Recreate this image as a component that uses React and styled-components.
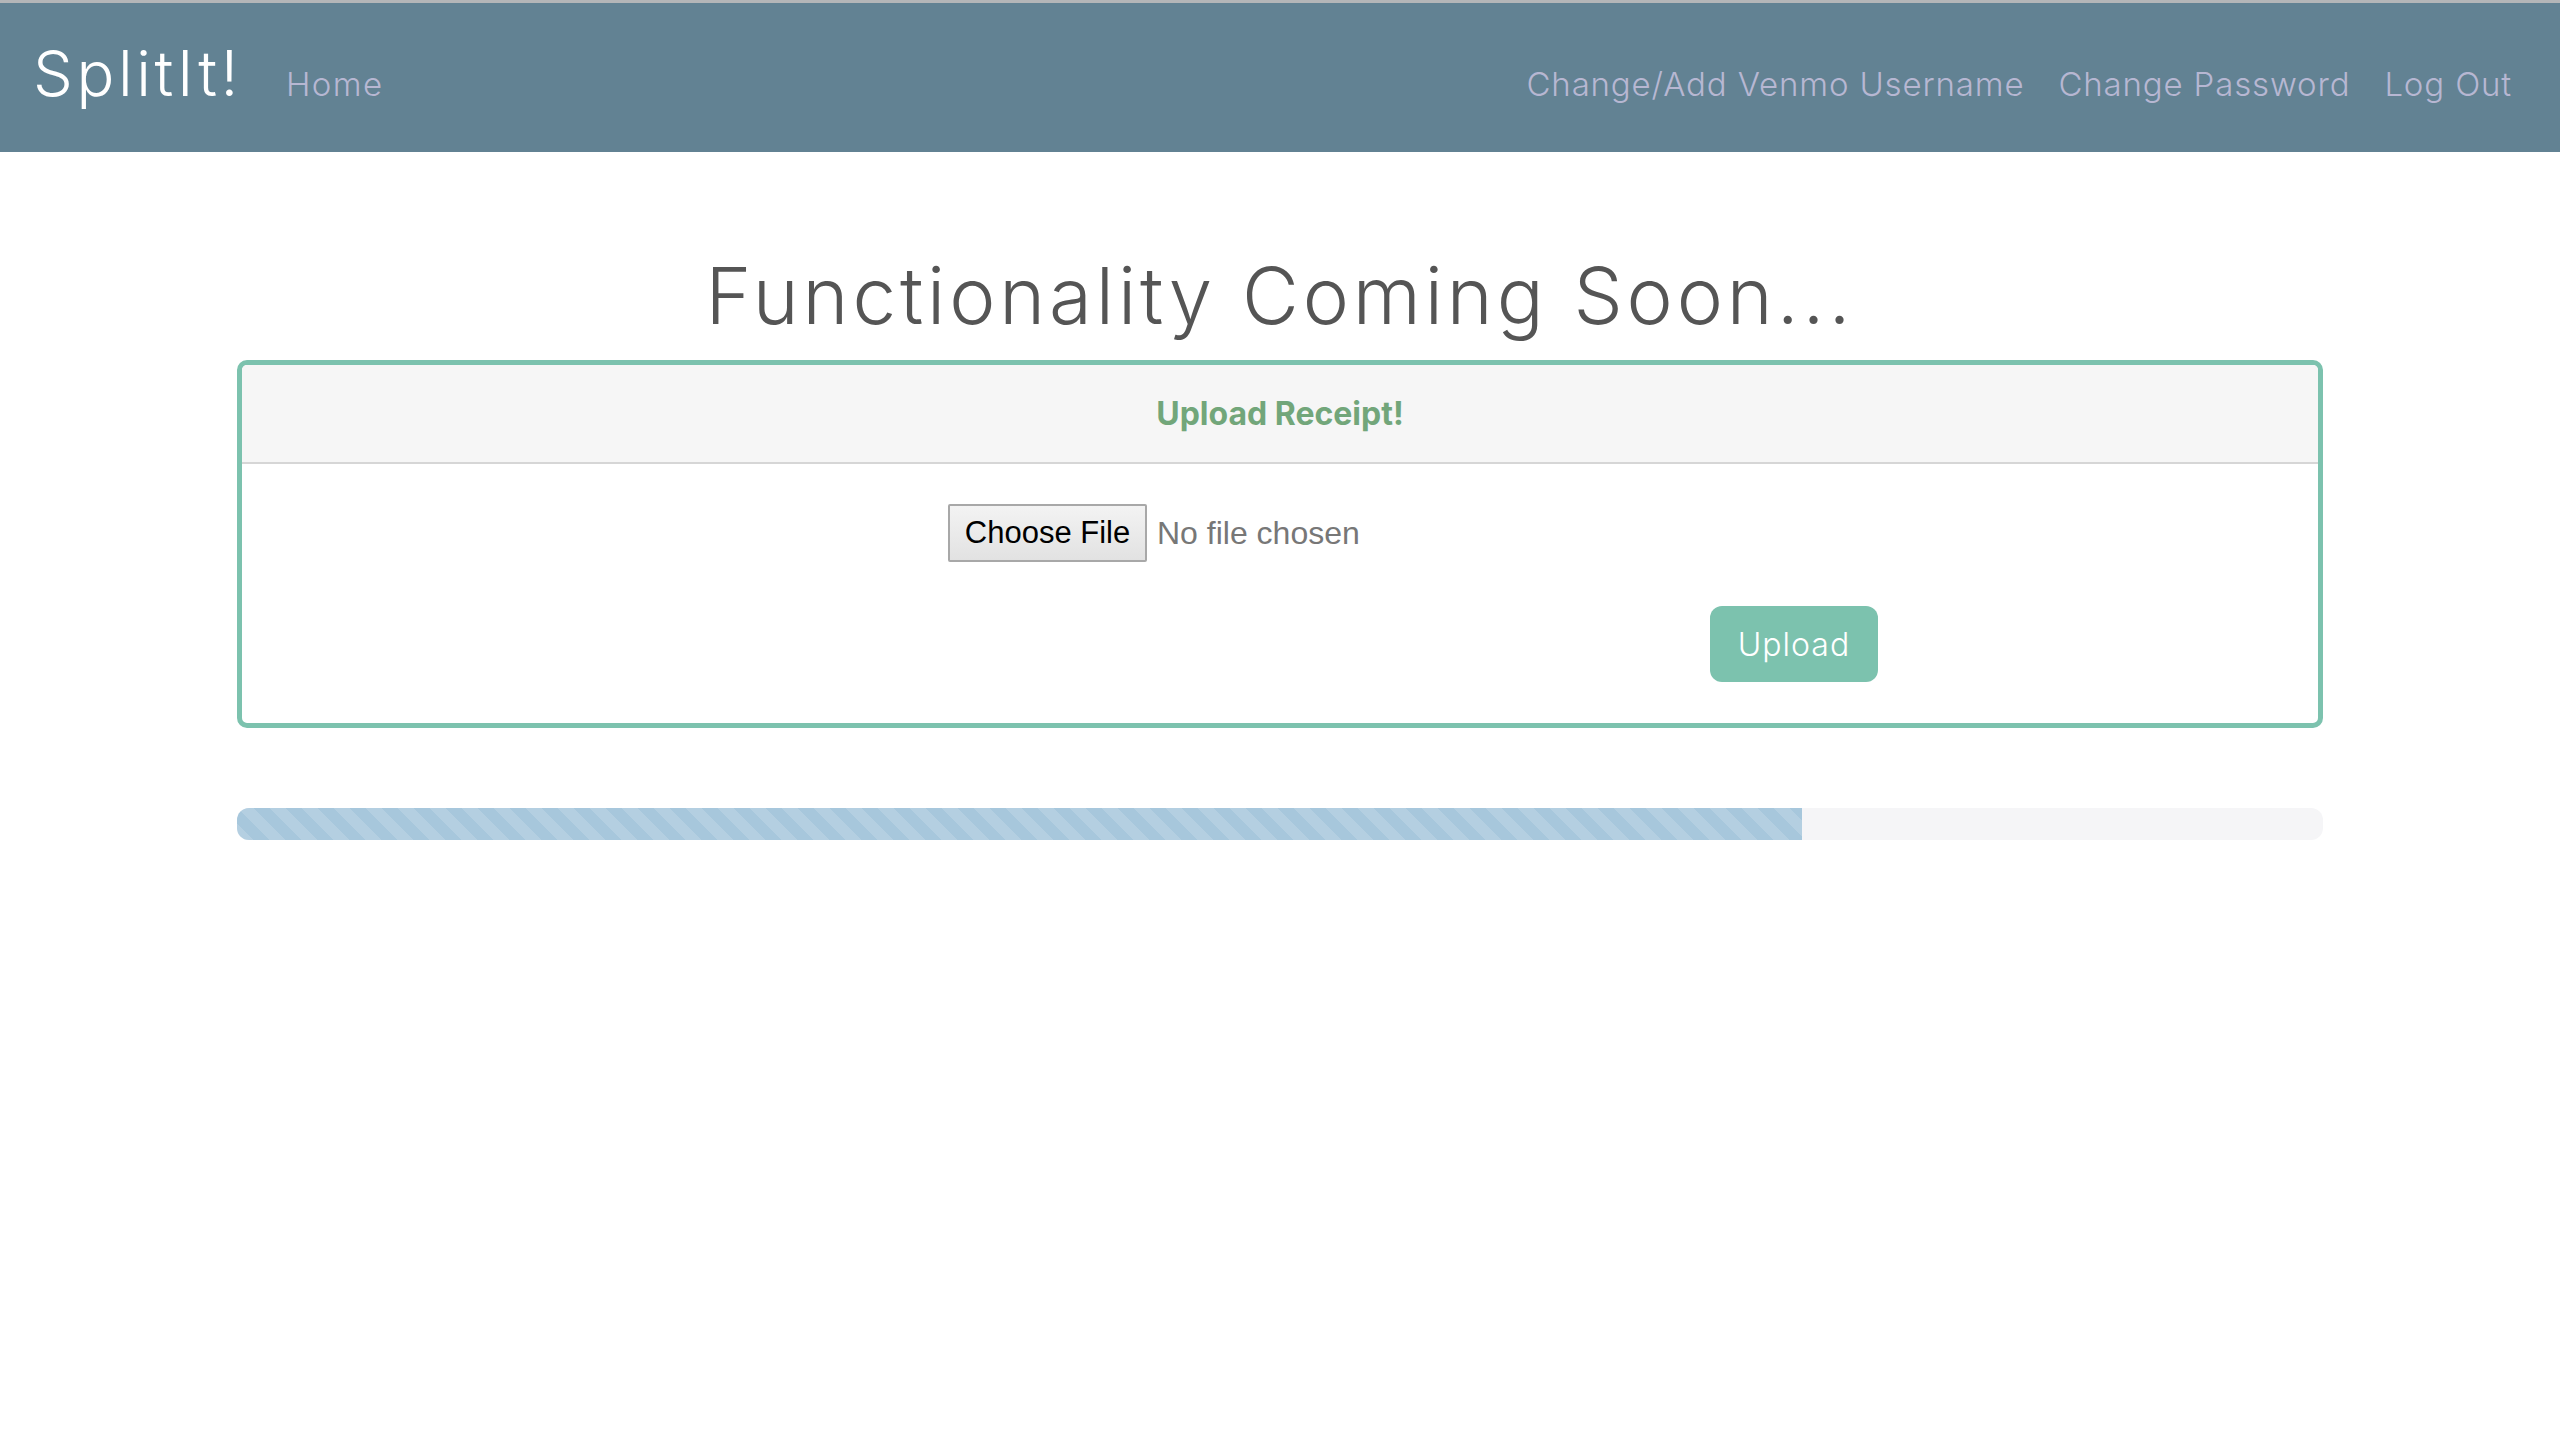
import React from 'react'
import styled, { createGlobalStyle } from 'styled-components'

const GlobalStyle = createGlobalStyle`
  html, body {
    margin: 0;
    padding: 0;
    background: #ffffff;
  }
  body {
    font-family: Inter, "Noto Sans", sans-serif;
    border-top: 3px solid #b4b6b8;
  }
`;

const Nav = styled.nav`
  box-sizing: border-box;
  height: 149px;
  background: #628293;
  display: flex;
  align-items: baseline;
  padding: 39px 48px 0 33px;
`;

const Brand = styled.a`
  font-size: 63px;
  font-weight: 300;
  line-height: 1;
  color: #ffffff;
  letter-spacing: 3.6px;
  margin-right: 44px;
  text-decoration: none;
`;

const NavLinks = styled.div`
  display: flex;
  align-items: baseline;
  gap: 34px;
  margin-left: ${p => (p.$right ? 'auto' : '0')};
`;

const NavLink = styled.a`
  font-size: 33px;
  font-weight: 300;
  line-height: 1;
  color: #b7b7d2;
  letter-spacing: ${p => (p.$wide ? '1.4px' : '0.85px')};
  text-decoration: none;
`;

const Main = styled.main`
  padding: 0 237px;
`;

const Heading = styled.h1`
  margin: 98px 0 18px;
  text-align: center;
  font-size: 78px;
  font-weight: 300;
  line-height: 92px;
  color: #555555;
  letter-spacing: 3.9px;
`;

const Card = styled.section`
  border: 5px solid #7cc2ae;
  border-radius: 10px;
  overflow: hidden;
`;

const CardHeader = styled.header`
  height: 97px;
  background: #f6f6f6;
  border-bottom: 2px solid #d6d6d6;
  display: flex;
  align-items: center;
  justify-content: center;
  font-size: 32px;
  font-weight: 700;
  color: #72a67a;
`;

const CardBody = styled.form`
  display: flex;
  flex-direction: column;
  gap: 44px;
  padding: 40px 440px 41px 706px;
`;

const FileRow = styled.div`
  display: flex;
  align-items: center;
  gap: 10px;
  font-family: "Liberation Sans", Arial, sans-serif;
`;

const FileButton = styled.label`
  box-sizing: border-box;
  width: 199px;
  height: 58px;
  display: flex;
  align-items: center;
  justify-content: center;
  font-size: 31px;
  color: #000000;
  background: linear-gradient(#f3f3f3, #e2e2e2);
  border: 2px solid #a8a8a8;
  border-radius: 2px;
`;

const FileName = styled.span`
  font-size: 32px;
  color: #777777;
`;

const ButtonRow = styled.div`
  display: flex;
  justify-content: flex-end;
`;

const UploadButton = styled.button`
  width: 168px;
  height: 76px;
  border: none;
  border-radius: 12px;
  background: #7cc2ae;
  color: #ffffff;
  font-family: Inter, "Noto Sans", sans-serif;
  font-size: 32px;
  font-weight: 300;
  letter-spacing: 1px;
  cursor: pointer;
`;

const Progress = styled.div`
  margin-top: 80px;
  height: 32px;
  border-radius: 12px;
  background: #f5f5f7;
  overflow: hidden;
  display: flex;
`;

const ProgressBar = styled.div`
  height: 100%;
  background-color: #a7c7dc;
  background-image: linear-gradient(
    45deg,
    rgba(255, 255, 255, 0.15) 25%,
    transparent 25%,
    transparent 50%,
    rgba(255, 255, 255, 0.15) 50%,
    rgba(255, 255, 255, 0.15) 75%,
    transparent 75%,
    transparent
  );
  background-size: 32px 32px;
`;

const App = () => {
  const progress = 75

  return (
    <>
      <GlobalStyle />
      <Nav>
        <Brand>SplitIt!</Brand>
        <NavLinks>
          <NavLink $wide>Home</NavLink>
        </NavLinks>
        <NavLinks $right>
          <NavLink>Change/Add Venmo Username</NavLink>
          <NavLink>Change Password</NavLink>
          <NavLink>Log Out</NavLink>
        </NavLinks>
      </Nav>

      <Main>
        <Heading>Functionality Coming Soon...</Heading>

        <Card>
          <CardHeader>Upload Receipt!</CardHeader>
          <CardBody onSubmit={e => e.preventDefault()}>
            <FileRow>
              <FileButton>Choose File</FileButton>
              <FileName>No file chosen</FileName>
            </FileRow>
            <ButtonRow>
              <UploadButton type="submit">Upload</UploadButton>
            </ButtonRow>
          </CardBody>
        </Card>

        <Progress>
          <ProgressBar style={{ width: `${progress}%` }} />
        </Progress>
      </Main>
    </>
  )
}

export default App
